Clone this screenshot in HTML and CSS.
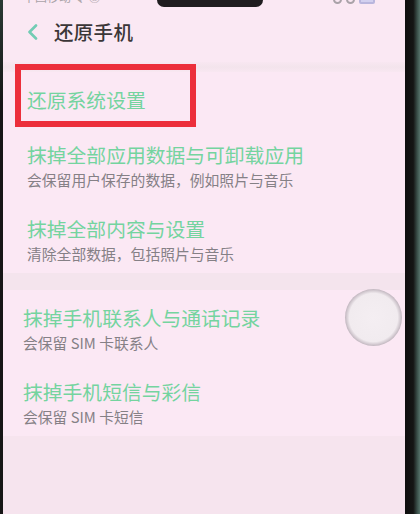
FILE: index.html
```html
<!DOCTYPE html>
<html lang="zh-CN">
<head>
<meta charset="utf-8">
<title>还原手机</title>
<link rel="stylesheet" href="styles.css">
</head>
<body>
<div class="phone">
  <div class="screen">
    <div class="status">
      <span class="carrier">中国移动 令 ◎</span>
      <span class="icons"><i class="sicon"></i><i class="sicon"></i><i class="sicon batt"></i></span>
    </div>
    <header class="topbar">
      <svg class="back" viewBox="0 0 12 16" width="12" height="16"><polyline points="9,1.5 2.5,8 9,14.5" fill="none" stroke="#72ccb4" stroke-width="2.6" stroke-linecap="round" stroke-linejoin="round"/></svg>
      <h1 class="title">还原手机</h1>
    </header>
    <div class="gap gap-sm"></div>
    <section class="card card-a">
      <div class="row row-first"><div class="row-title">还原系统设置</div></div>
      <div class="row">
        <div class="row-title">抹掉全部应用数据与可卸载应用</div>
        <div class="row-sub">会保留用户保存的数据，例如照片与音乐</div>
      </div>
      <div class="row">
        <div class="row-title">抹掉全部内容与设置</div>
        <div class="row-sub">清除全部数据，包括照片与音乐</div>
      </div>
    </section>
    <div class="gap gap-lg"></div>
    <section class="card card-b">
      <div class="row">
        <div class="row-title">抹掉手机联系人与通话记录</div>
        <div class="row-sub">会保留 SIM 卡联系人</div>
      </div>
      <div class="row">
        <div class="row-title">抹掉手机短信与彩信</div>
        <div class="row-sub">会保留 SIM 卡短信</div>
      </div>
    </section>
    <div class="rest"></div>
  </div>
  <div class="bezel-right"></div>
</div>
<div class="notch"></div>
<div class="highlight"></div>
<div class="float-ball"></div>
</body>
</html>
```
FILE: styles.css
```css
html, body {
  margin: 0;
  padding: 0;
  background: #141414;
}
body {
  width: 420px;
  height: 514px;
  overflow: hidden;
  position: relative;
  font-family: "Noto Sans CJK SC", "Noto Sans", sans-serif;
}
.phone {
  display: flex;
  height: 514px;
  padding-left: 3px;
  box-sizing: border-box;
  background: linear-gradient(180deg, #2a3a34 0%, #161616 20%, #161616 100%);
}
.screen {
  flex: 0 0 402px;
  display: flex;
  flex-direction: column;
  background: #fae8f3;
}
.bezel-right {
  flex: 1;
  background: linear-gradient(90deg, #0e0e0e 0%, #141414 55%, #3f5650 85%, #56716a 100%);
}
.status {
  height: 5px;
  overflow: hidden;
  display: flex;
  justify-content: space-between;
  padding: 0 30px 0 20px;
}
.carrier {
  font-size: 12px;
  line-height: 12px;
  margin-top: -9px;
  color: #aaa3a8;
}
.icons {
  display: flex;
  gap: 4px;
  margin-top: -5px;
}
.sicon {
  display: block;
  width: 9px;
  height: 9px;
  border-radius: 50%;
  border: 2px solid #a9a2a8;
  box-sizing: border-box;
}
.sicon.batt {
  width: 16px;
  border-radius: 2px;
  border-color: #b9b6dd;
  background: #d2d0ef;
}
.topbar {
  height: 57px;
  box-sizing: border-box;
  display: flex;
  align-items: center;
  padding: 0 0 4px 24px;
}
.back {
  display: block;
  margin-right: 15px;
}
.title {
  margin: 0;
  font-size: 19.5px;
  line-height: 26px;
  font-weight: 500;
  color: #3a3637;
  letter-spacing: 0.3px;
}
.gap {
  background: #f4e4ed;
}
.gap-sm {
  height: 10px;
  background: linear-gradient(180deg, #f8e7f1, #f3e4ec 50%, #f8e7f1);
}
.gap-lg {
  height: 17px;
}
.card {
  padding-top: 2px;
  display: flex;
  flex-direction: column;
  background: #fbe8f4;
}
.card-a .row {
  padding-left: 24px;
}
.card-b .row {
  padding-left: 20px;
}
.row {
  padding-top: 14px;
  padding-bottom: 14px;
}
.row-first {
  padding-bottom: 17px;
}
.row:last-child {
  padding-bottom: 10px;
}
.row-title {
  font-size: 19.8px;
  line-height: 24px;
  color: #74d49f;
  white-space: nowrap;
}
.row-sub {
  margin-top: 4px;
  font-size: 14.8px;
  line-height: 18px;
  color: #858086;
  white-space: nowrap;
}
.rest {
  flex: 1;
  background: #f6e4ee;
}
.notch {
  position: absolute;
  left: 157px;
  top: 0;
  width: 106px;
  height: 7px;
  background: #1f1d1f;
  border-radius: 0 0 9px 9px;
}
.highlight {
  position: absolute;
  left: 15px;
  top: 64px;
  width: 181px;
  height: 63px;
  box-sizing: border-box;
  border: 6px solid #ec2f3b;
}
.float-ball {
  position: absolute;
  left: 345px;
  top: 289px;
  width: 57px;
  height: 57px;
  border-radius: 50%;
  background: radial-gradient(circle, #f4eef2 0%, #f1ebef 60%, #c9bfc7 69%, #9d929b 78%, #a79ea5 86%, rgba(205,195,203,0.7) 94%, rgba(250,232,243,0) 100%);
}
```
